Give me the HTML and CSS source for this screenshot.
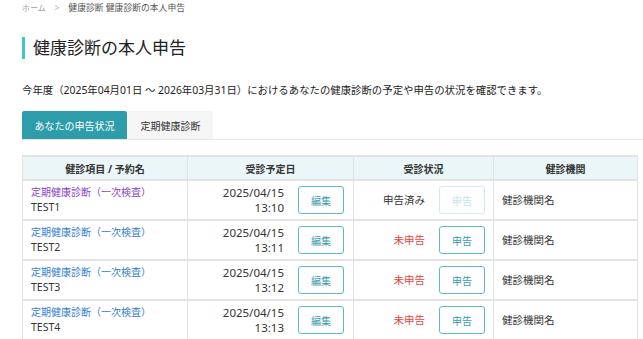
FILE: index.html
```html
<!doctype html>
<html lang="ja">
 <head>
  <meta charset="UTF-8">
  <title>健康診断の本人申告</title>
  <link rel="stylesheet" href="styles.css">
 </head>
 <body>
  <div class="page">
   <nav class="crumbs">
    <a href="#">ホーム</a>
    <span class="sep">&gt;</span>
    <span class="here">健康診断 健康診断の本人申告</span>
   </nav>

   <h1 class="title">健康診断の本人申告</h1>

   <p class="lead">今年度（2025年04月01日 〜 2026年03月31日）におけるあなたの健康診断の予定や申告の状況を確認できます。</p>

   <div class="tabs">
    <a class="tab active" href="#">あなたの申告状況</a>
    <a class="tab" href="#">定期健康診断</a>
   </div>

   <table class="list">
    <thead>
     <tr>
      <th class="c1">健診項目 / 予約名</th>
      <th class="c2">受診予定日</th>
      <th class="c3">受診状況</th>
      <th class="c4">健診機関</th>
     </tr>
    </thead>
    <tbody>
     <tr>
      <td><a class="visited" href="#">定期健康診断（一次検査）</a><br>TEST1</td>
      <td class="when"><div class="cell"><span class="date">2025/04/15<br>13:10</span><button class="btn">編集</button></div></td>
      <td><div class="cell"><span class="done">申告済み</span><button class="btn" disabled>申告</button></div></td>
      <td>健診機関名</td>
     </tr>
     <tr>
      <td><a href="#">定期健康診断（一次検査）</a><br>TEST2</td>
      <td class="when"><div class="cell"><span class="date">2025/04/15<br>13:11</span><button class="btn">編集</button></div></td>
      <td><div class="cell"><span class="todo">未申告</span><button class="btn">申告</button></div></td>
      <td>健診機関名</td>
     </tr>
     <tr>
      <td><a href="#">定期健康診断（一次検査）</a><br>TEST3</td>
      <td class="when"><div class="cell"><span class="date">2025/04/15<br>13:12</span><button class="btn">編集</button></div></td>
      <td><div class="cell"><span class="todo">未申告</span><button class="btn">申告</button></div></td>
      <td>健診機関名</td>
     </tr>
     <tr>
      <td><a href="#">定期健康診断（一次検査）</a><br>TEST4</td>
      <td class="when"><div class="cell"><span class="date">2025/04/15<br>13:13</span><button class="btn">編集</button></div></td>
      <td><div class="cell"><span class="todo">未申告</span><button class="btn">申告</button></div></td>
      <td>健診機関名</td>
     </tr>
    </tbody>
   </table>
  </div>
 </body>
</html>
```

FILE: styles.css
```css
*
{
  margin: 0;
  padding: 0;
  box-sizing: border-box;
  font-family: "Noto Sans", "Noto Sans CJK JP", sans-serif;
}
body
{
  background: #fff;
  color: #333;
  overflow: hidden;
}
.page
{
  padding: 2px 0 0 22px;
}
.crumbs
{
  display: flex;
  align-items: center;
  gap: 8px;
  font-size: 8px;
  line-height: 12px;
  color: #555;
}
.crumbs a
{
  color: #a0a0a0;
  text-decoration: none;
}
.crumbs .sep
{
  color: #aaa;
  margin: 0 1px;
}
.crumbs .here
{
  font-size: 8.8px;
}
.title
{
  margin-top: 23px;
  border-left: 3px solid #3fc4d6;
  padding-left: 8px;
  font-size: 17px;
  font-weight: 400;
  line-height: 22px;
  color: #222;
}
.lead
{
  margin-top: 24px;
  font-size: 10.4px;
  line-height: 14px;
  color: #222;
}
.tabs
{
  margin-top: 14px;
  display: flex;
  gap: 1px;
  border-bottom: 1px solid #e6e6e6;
}
.tab
{
  height: 28px;
  padding: 0 12px;
  display: flex;
  align-items: center;
  justify-content: center;
  font-size: 10px;
  color: #333;
  text-decoration: none;
  background: #f5f5f5;
  border-radius: 2px 2px 0 0;
}
.tab.active
{
  width: 105px;
  background: #2d9cab;
  color: #fff;
}
.tab:nth-child(2)
{
  width: 85px;
}
.list
{
  margin-top: 15px;
  width: 616px;
  border-collapse: collapse;
  table-layout: fixed;
  font-size: 10.5px;
  color: #333;
}
.list th,
.list td
{
  border: 1px solid #e3e3e3;
  border-width: 2px 1px 1px;
}
.list th
{
  height: 24px;
  background: #ebf6f8;
  font-weight: 700;
  font-size: 10px;
  text-align: center;
}
.list .c1 { width: 165px; }
.list .c2 { width: 166px; }
.list .c3 { width: 140px; }
.list td
{
  height: 40px;
  padding: 0 8px;
  line-height: 15px;
  vertical-align: middle;
}
.list td.when
{
  padding-right: 9px;
}
.list td a
{
  font-size: 10px;
  color: #2f7dd4;
  text-decoration: none;
}
.list td a.visited
{
  color: #8640d0;
}
.cell
{
  display: flex;
  align-items: center;
  justify-content: flex-end;
  gap: 14px;
}
.date
{
  text-align: right;
  font-size: 11.5px;
  line-height: 15px;
  color: #333;
}
.done
{
  color: #333;
}
.todo
{
  color: #e8453c;
}
.btn
{
  width: 46px;
  height: 28px;
  background: #fff;
  border: 1px solid #5dbac5;
  border-radius: 3px;
  color: #3a9dab;
  font-size: 10px;
  cursor: pointer;
}
.btn:disabled
{
  border-color: #d3ecef;
  color: #c4e4e8;
}
```
